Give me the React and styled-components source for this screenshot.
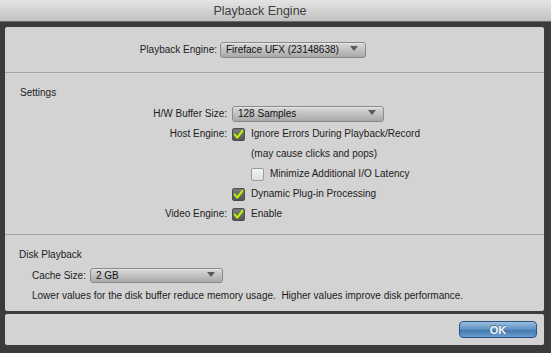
import React from "react";
import styled, { createGlobalStyle } from "styled-components";

const GlobalStyle = createGlobalStyle`
  html, body {
    margin: 0;
    padding: 0;
    background: #3b3b3b;
  }
  body {
    font-family: "Liberation Sans", Arial, sans-serif;
    font-size: 10px;
    color: #1c1c1c;
  }
`;

const Window = styled.div`
  width: 551px;
  height: 353px;
  display: flex;
  flex-direction: column;
  background: #3b3b3b;
  overflow: hidden;
`;

const TitleBar = styled.div`
  height: 21px;
  display: flex;
  align-items: center;
  justify-content: center;
  background: linear-gradient(#e4e4e4, #c2c2c2);
  border-bottom: 1px solid #6a6a6a;
  color: #3e3e3e;
  font-size: 12.5px;
  padding-right: 31px;
`;

const Body = styled.div`
  flex: 1;
  display: flex;
  flex-direction: column;
  gap: 3px;
  padding: 5px 7px 7px 5px;
`;

const Panel = styled.div`
  background: #d3d3d3;
  border-radius: 2px;
  display: flex;
  flex-direction: column;
`;

const Section = styled.div`
  padding: ${(p) => p.$pad};
  border-top: ${(p) => (p.$first ? "none" : "1px solid #a4a4a4")};
`;

const SectionTitle = styled.div`
  line-height: 14px;
  padding-left: ${(p) => p.$indent}px;
`;

const EngineRow = styled.div`
  display: flex;
  align-items: center;
  gap: 3px;
`;

const Label = styled.div`
  width: ${(p) => p.$w}px;
  text-align: right;
  flex-shrink: 0;
  line-height: 14px;
`;

const Select = styled.div`
  position: relative;
  width: ${(p) => p.$w}px;
  height: ${(p) => p.$h || 16}px;
  box-sizing: border-box;
  border: 1px solid #8a8a8a;
  border-radius: 3px;
  background: linear-gradient(#d9d9d9, #a9a9a9);
  padding-left: 5px;
  display: flex;
  align-items: center;
  line-height: 14px;
  color: #111;
  box-shadow: inset 0 1px 0 rgba(255, 255, 255, 0.35);
`;

const Arrow = styled.span`
  position: absolute;
  right: 7px;
  top: 3px;
  width: 0;
  height: 0;
  border-left: 4px solid transparent;
  border-right: 4px solid transparent;
  border-top: 5px solid #5a5a5a;
`;

const Grid = styled.div`
  display: grid;
  grid-template-columns: 222px 1fr;
  grid-auto-rows: 20px;
  column-gap: 5px;
  align-items: center;
  margin-top: 4px;
`;

const GridLabel = styled.div`
  text-align: right;
  line-height: 14px;
`;

const Control = styled.div`
  display: flex;
  align-items: center;
  gap: 6px;
  padding-left: ${(p) => p.$indent || 0}px;
  line-height: 14px;
  grid-column: 2;
`;

const Box = styled.span`
  width: 13px;
  height: 13px;
  box-sizing: border-box;
  border-radius: 2px;
  flex-shrink: 0;
  display: flex;
  align-items: center;
  justify-content: center;
  border: 1px solid ${(p) => (p.$on ? "#4c4c4c" : "#9c9c9c")};
  background: ${(p) =>
    p.$on ? "linear-gradient(#7c7c7c, #555)" : "linear-gradient(#f4f4f4, #dedede)"};
`;

const CacheRow = styled.div`
  display: flex;
  align-items: center;
  gap: 4px;
  padding-left: 27px;
  margin-top: 6px;
`;

const Note = styled.div`
  padding-left: 27px;
  margin-top: 6px;
  line-height: 14px;
`;

const Footer = styled.div`
  background: #d3d3d3;
  border-radius: 2px;
  height: 31px;
  display: flex;
  align-items: center;
  justify-content: flex-end;
  padding-right: 7px;
`;

const OkButton = styled.button`
  width: 78px;
  height: 17px;
  border: 1px solid #2b5482;
  border-radius: 4px;
  background: linear-gradient(#9cbfe0, #5b8fc2 50%, #3f75ab 51%, #6a9cce);
  color: #f4f7fa;
  font-family: "Liberation Sans", Arial, sans-serif;
  font-weight: bold;
  font-size: 11px;
  padding: 0;
  text-shadow: 0 -1px 0 rgba(0, 0, 0, 0.35);
`;

const Check = ({ on }) => (
  <Box $on={on}>
    {on && (
      <svg width="11" height="11" viewBox="0 0 11 11">
        <path
          d="M1.8 5.6 L4.3 8.6 L9.4 1.8"
          fill="none"
          stroke="#b6f200"
          strokeWidth="2.2"
          strokeLinecap="round"
          strokeLinejoin="round"
        />
      </svg>
    )}
  </Box>
);

export default function App() {
  return (
    <Window>
      <GlobalStyle />
      <TitleBar>Playback Engine</TitleBar>
      <Body>
        <Panel>
          <Section $first $pad="15px 0 14px 0">
            <EngineRow>
              <Label $w={212}>Playback Engine:</Label>
              <Select $w={146}>
                Fireface UFX (23148638)
                <Arrow />
              </Select>
            </EngineRow>
          </Section>
          <Section $pad="13px 0 10px 0">
            <SectionTitle $indent={15}>Settings</SectionTitle>
            <Grid>
              <GridLabel>H/W Buffer Size:</GridLabel>
              <Control>
                <Select $w={152}>
                  128 Samples
                  <Arrow />
                </Select>
              </Control>
              <GridLabel>Host Engine:</GridLabel>
              <Control>
                <Check on />
                Ignore Errors During Playback/Record
              </Control>
              <Control $indent={19}>(may cause clicks and pops)</Control>
              <Control $indent={19}>
                <Check />
                Minimize Additional I/O Latency
              </Control>
              <Control>
                <Check on />
                Dynamic Plug-in Processing
              </Control>
              <GridLabel>Video Engine:</GridLabel>
              <Control>
                <Check on />
                Enable
              </Control>
            </Grid>
          </Section>
          <Section $pad="13px 0 8px 0">
            <SectionTitle $indent={14}>Disk Playback</SectionTitle>
            <CacheRow>
              <span>Cache Size:</span>
              <Select $w={133} $h={15}>
                2 GB
                <Arrow />
              </Select>
            </CacheRow>
            <Note>
              Lower values for the disk buffer reduce memory usage.&nbsp; Higher values improve disk
              performance.
            </Note>
          </Section>
        </Panel>
        <Footer>
          <OkButton>OK</OkButton>
        </Footer>
      </Body>
    </Window>
  );
}
